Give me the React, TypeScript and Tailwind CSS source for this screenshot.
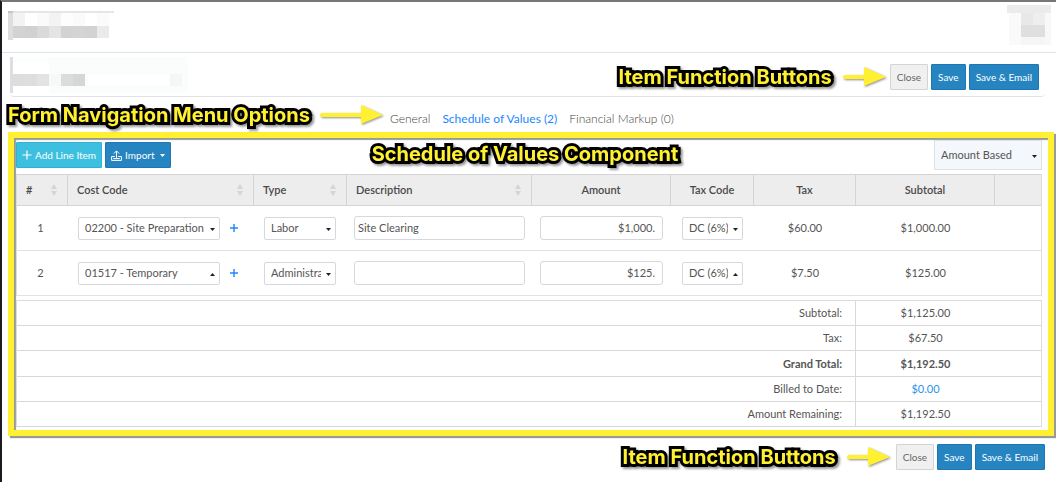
import type { ReactNode } from "react";

type Block = [x: number, y: number, w: number, h: number, fill: string];

const LOGO_BLOCKS: Block[] = [
  [0, 0, 106, 2, "#e6e6e6"],
  [0, 0, 5, 29, "#dedede"],
  [0, 0, 5, 2, "#c4c4c4"],
  [5, 2, 12, 13, "#f3f3f4"],
  [29, 2, 12, 13, "#fafafa"],
  [41, 2, 12, 13, "#f3f3f3"],
  [53, 2, 12, 13, "#fdfdfd"],
  [65, 2, 12, 13, "#fafafb"],
  [89, 2, 12, 13, "#fbfbfb"],
  [5, 15, 12, 12, "#d2d3d5"],
  [17, 15, 12, 12, "#d0d1d3"],
  [29, 15, 12, 12, "#d8d9db"],
  [41, 15, 12, 12, "#e2e5e4"],
  [53, 15, 12, 12, "#d2d3d5"],
  [65, 15, 12, 12, "#d3d4d6"],
  [77, 15, 12, 12, "#d1d2d4"],
  [89, 15, 12, 12, "#e9ebea"],
];

const AVATAR_BLOCKS: Block[] = [
  [0, 0, 44, 8, "#ebebec"],
  [2, 8, 12, 32, "#fafafa"],
  [14, 8, 12, 12, "#e8e8e8"],
  [26, 8, 12, 12, "#eeeeee"],
  [14, 20, 24, 12, "#dfdfe0"],
  [14, 32, 24, 8, "#f6f6f7"],
  [38, 8, 6, 32, "#f8f8f8"],
];

const TITLE_BLOCKS: Block[] = [
  [0, 0, 3, 36, "#dedede"],
  [39, 0, 139, 36, "#fbfdfc"],
  [3, 0, 36, 5, "#fcfdfd"],
  [78, 17, 82, 12, "#ffffff"],
  [3, 17, 12, 12, "#dcdddf"],
  [15, 17, 12, 12, "#dddedf"],
  [27, 17, 12, 12, "#e2e4e4"],
  [39, 17, 12, 12, "#f8f8f8"],
  [51, 17, 12, 12, "#dbdcde"],
  [63, 17, 12, 12, "#d5d6d8"],
  [160, 17, 12, 12, "#f6f6f6"],
];

function Mosaic({ blocks, width, height }: { blocks: Block[]; width: number; height: number }) {
  return (
    <svg width={width} height={height} viewBox={`0 0 ${width} ${height}`} shapeRendering="crispEdges" aria-hidden="true">
      {blocks.map(([x, y, w, h, fill], i) => (
        <rect key={i} x={x} y={y} width={w} height={h} fill={fill} />
      ))}
    </svg>
  );
}

function Callout({ children }: { children: ReactNode }) {
  return (
    <span className="whitespace-nowrap font-['Inter',sans-serif] text-[20px] leading-6 font-bold text-[#fff032] [-webkit-text-stroke:6px_#000] [paint-order:stroke_fill] drop-shadow-[2px_2px_1px_rgba(0,0,0,0.4)]">
      {children}
    </span>
  );
}

function Arrow({ length }: { length: number }) {
  return (
    <svg
      width={length}
      height="22"
      viewBox={`0 0 ${length} 22`}
      className="shrink-0 drop-shadow-[1px_1px_1px_rgba(0,0,0,0.45)]"
      aria-hidden="true"
    >
      <path d={`M2 11H${length - 20}`} stroke="#fff032" strokeWidth="4" strokeLinecap="round" />
      <path d={`M${length - 23} 1L${length - 1} 11L${length - 23} 20Z`} fill="#fff032" />
    </svg>
  );
}

function FormActions() {
  const primary = "h-[26px] rounded-[1px] border border-[#1b78b5] bg-[#2685c1] px-[6px] text-white";
  return (
    <div className="flex gap-[3px] text-[10px]">
      <button type="button" className="h-[26px] rounded-[1px] border border-[#d4d4d4] bg-[#f0f0f0] px-[6px] text-[#666]">
        Close
      </button>
      <button type="button" className={primary}>
        Save
      </button>
      <button type="button" className={primary}>
        Save &amp; Email
      </button>
    </div>
  );
}

function Caret({ up = false }: { up?: boolean }) {
  return (
    <svg width="5" height="3" viewBox="0 0 5 3" className="pointer-events-none absolute top-1/2 right-[5px]" aria-hidden="true">
      <path d={up ? "M0 3L2.5 0L5 3Z" : "M0 0L2.5 3L5 0Z"} fill="#222" />
    </svg>
  );
}

function Select({ label, value, up }: { label: string; value: string; up?: boolean }) {
  return (
    <div className="relative w-full min-w-0">
      <select
        aria-label={label}
        defaultValue={value}
        className="block h-[23px] w-full appearance-none rounded-[2px] border border-[#d5d9df] bg-white pr-[14px] pl-[6px] text-[11px] text-[#555]"
      >
        <option>{value}</option>
      </select>
      <Caret up={up} />
    </div>
  );
}

function SortIcon() {
  return (
    <svg width="6" height="12" viewBox="0 0 6 12" aria-hidden="true">
      <path d="M0 5L3 0L6 5ZM0 7L3 12L6 7Z" fill="#d5d5d5" />
    </svg>
  );
}

const COLUMNS = [
  { name: "#", width: "w-[51px]", sortable: true },
  { name: "Cost Code", width: "w-[186px]", sortable: true },
  { name: "Type", width: "w-[93px]", sortable: true },
  { name: "Description", width: "w-auto", sortable: true },
  { name: "Amount", width: "w-[139px]", sortable: false },
  { name: "Tax Code", width: "w-[83px]", sortable: false },
  { name: "Tax", width: "w-[102px]", sortable: false },
  { name: "Subtotal", width: "w-[139px]", sortable: false },
  { name: "", width: "w-[46px]", sortable: false },
];

const ITEMS = [
  { code: "02200 - Site Preparation", type: "Labor", text: "Site Clearing", amount: "$1,000.", tax: "$60.00", subtotal: "$1,000.00", up: false },
  { code: "01517 - Temporary", type: "Administration", text: "", amount: "$125.", tax: "$7.50", subtotal: "$125.00", up: true },
];

const TOTALS = [
  { label: "Subtotal:", value: "$1,125.00" },
  { label: "Tax:", value: "$67.50" },
  { label: "Grand Total:", value: "$1,192.50", bold: true },
  { label: "Billed to Date:", value: "$0.00", link: true },
  { label: "Amount Remaining:", value: "$1,192.50" },
];

function LineItems() {
  const input = "block h-[24px] w-full rounded-[3px] border border-[#d5d9df] bg-white pb-[2px] text-[11px] text-[#555]";
  return (
    <table className="w-full table-fixed border-separate border-spacing-0 border-r border-l border-[#dcdcdc]">
      <thead>
        <tr>
          {COLUMNS.map((c, i) => (
            <th
              key={i}
              className={`${c.width} h-[32px] border-y border-r border-[#d4d4d4] bg-[#ededed] p-0 font-semibold text-[#4a4a4a] last:border-r-0`}
            >
              <div className={c.sortable ? "flex items-center justify-between pr-[10px] pl-[9px]" : "text-center"}>
                {c.name}
                {c.sortable && <SortIcon />}
              </div>
            </th>
          ))}
        </tr>
      </thead>
      <tbody>
        {ITEMS.map((item, i) => (
          <tr key={item.code} className="text-center [&>td]:h-[45px] [&>td]:border-b [&>td]:border-[#dfe2e6] [&>td]:p-0">
            <td>
              <div className="pr-1">{i + 1}</div>
            </td>
            <td>
              <div className="flex items-center gap-[9px] pr-[15px] pl-[10px]">
                <Select label="Cost code" value={item.code} up={item.up} />
                <button type="button" aria-label="Add cost code" className="shrink-0 text-[#1b87ff]">
                  <svg width="10" height="10" viewBox="0 0 10 10" aria-hidden="true">
                    <path d="M5 1V9M1 5H9" stroke="currentColor" strokeWidth="1.4" />
                  </svg>
                </button>
              </div>
            </td>
            <td>
              <div className="pr-[11px] pl-[10px]">
                <Select label="Type" value={item.type} />
              </div>
            </td>
            <td>
              <div className="px-[7px]">
                <input aria-label="Description" defaultValue={item.text} className={`${input} px-[3px]`} />
              </div>
            </td>
            <td>
              <div className="px-[8px]">
                <input aria-label="Amount" defaultValue={item.amount} className={`${input} px-[7px] text-right`} />
              </div>
            </td>
            <td>
              <div className="px-[11px]">
                <Select label="Tax code" value="DC (6%)" up={item.up} />
              </div>
            </td>
            <td>{item.tax}</td>
            <td>{item.subtotal}</td>
            <td />
          </tr>
        ))}
      </tbody>
    </table>
  );
}

function Totals() {
  return (
    <table className="mt-1 w-full table-fixed border-separate border-spacing-0 border-t border-r border-l border-[#dcdcdc]">
      <tbody>
        {TOTALS.map((t) => {
          const weight = t.bold ? "h-[26px] font-bold" : "h-[25px] font-normal";
          return (
            <tr key={t.label}>
              <th scope="row" className={`${weight} border-r border-b border-[#d8d8d8] p-0 pr-[13px] text-right`}>
                {t.label}
              </th>
              <td className={`${weight} w-[185px] border-b border-[#d8d8d8] p-0 pr-[46px] text-center`}>
                {t.link ? (
                  <a href="#billed" className="text-[#2b93ea]">
                    {t.value}
                  </a>
                ) : (
                  t.value
                )}
              </td>
            </tr>
          );
        })}
      </tbody>
    </table>
  );
}

export default function App() {
  return (
    <div className="min-h-screen border-t-2 border-l-2 border-t-[#777] border-l-[#1c1a20] bg-white font-['Lato',sans-serif] text-[11px] leading-4 text-[#555]">
      <header className="flex h-[51px] items-start justify-between border-b border-[#dfe2e8] pr-[5px] pl-[6px]">
        <div className="pt-[9px]">
          <Mosaic blocks={LOGO_BLOCKS} width={106} height={29} />
        </div>
        <div className="pt-[3px]">
          <Mosaic blocks={AVATAR_BLOCKS} width={44} height={40} />
        </div>
      </header>

      <section className="mr-[11px] ml-[8px] flex h-[44px] items-center justify-between rounded-b border-b border-[#dfe2e8] pr-[6px]">
        <Mosaic blocks={TITLE_BLOCKS} width={178} height={36} />
        <div className="flex items-center pt-1">
          <Callout>Item Function Buttons</Callout>
          <div className="mr-[3px] ml-[11px] flex">
            <Arrow length={44} />
          </div>
          <FormActions />
        </div>
      </section>

      <nav className="flex h-[35px] items-center pl-[6px] text-[12px] font-light text-[#444]">
        <Callout>Form Navigation Menu Options</Callout>
        <div className="mr-[6px] ml-[10px] flex">
          <Arrow length={64} />
        </div>
        <div className="flex gap-3 pt-2">
          <a href="#general">General</a>
          <a href="#schedule" aria-current="page" className="font-normal text-[#1b87ff]">
            Schedule of Values (2)
          </a>
          <a href="#markup">Financial Markup (0)</a>
        </div>
      </nav>

      <main className="mr-[2px] ml-[6px] border-[6px] border-[#fff032] pr-[6px] pb-[3px] pl-[2px] shadow-[2px_2px_1px_rgba(0,0,0,0.4),inset_2px_2px_1px_rgba(0,0,0,0.4)]">
        <div className="flex h-[36px] items-start justify-between pt-[2px] text-[10px]">
          <div className="flex flex-1 gap-[3px] pt-[2px]">
            <button type="button" className="flex h-[26px] items-center gap-[3px] rounded-[1px] border border-[#2fb2d4] bg-[#3dbfe0] px-[5px] text-white">
              <svg width="10" height="10" viewBox="0 0 10 10" aria-hidden="true">
                <path d="M5 0.5V9.5M0.5 5H9.5" stroke="currentColor" strokeWidth="1.2" />
              </svg>
              Add Line Item
            </button>
            <button type="button" className="flex h-[26px] items-center gap-[3px] rounded-[1px] border border-[#1b78b5] bg-[#2685c1] px-[5px] text-white">
              <svg width="11" height="11" viewBox="0 0 11 11" fill="none" stroke="currentColor" aria-hidden="true">
                <path d="M5.5 7.8V1M2.8 3.6L5.5 0.9L8.2 3.6M3.8 6.5H0.6V10.4H10.4V6.5H7.2M2.2 8.6H8.8" />
              </svg>
              Import
              <svg width="5" height="3" viewBox="0 0 5 3" className="ml-[2px]" aria-hidden="true">
                <path d="M0 0L2.5 3L5 0Z" fill="currentColor" />
              </svg>
            </button>
          </div>
          <div className="pt-[2px] pr-2">
            <Callout>Schedule of Values Component</Callout>
          </div>
          <div className="flex flex-1 justify-end">
            <div className="relative w-[108px]">
              <select
                aria-label="Calculation basis"
                className="block h-[30px] w-full appearance-none border border-[#dde2e8] bg-[#f4f7fb] pl-[6px] text-[11px] text-[#555]"
              >
                <option>Amount Based</option>
              </select>
              <Caret />
            </div>
          </div>
        </div>
        <LineItems />
        <Totals />
      </main>

      <footer className="flex items-center justify-end pt-2 pr-[11px] pb-3">
        <Callout>Item Function Buttons</Callout>
        <div className="mr-[5px] ml-[11px] flex">
          <Arrow length={44} />
        </div>
        <FormActions />
      </footer>
    </div>
  );
}
